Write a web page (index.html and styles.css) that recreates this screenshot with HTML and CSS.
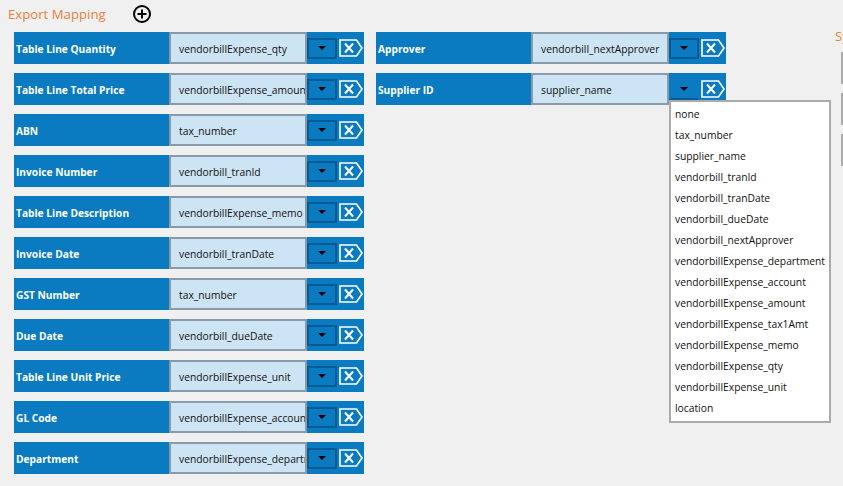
FILE: index.html
```html
<!DOCTYPE html>
<html lang="en">
<head>
	<meta charset="UTF-8">
	<title>Export Mapping</title>
	<link rel="stylesheet" href="styles.css">
</head>
<body>
	<div class="page">
		<div class="mapping">
			<div class="head">
				<span class="title">Export Mapping</span>
				<span class="add">
					<svg width="20" height="20" viewBox="0 0 20 20">
						<circle cx="10" cy="10" r="8" fill="none" stroke="#000" stroke-width="2"/>
						<path d="M10 5.5V14.5M5.5 10H14.5" stroke="#000" stroke-width="2"/>
					</svg>
				</span>
			</div>
			<div class="cols">
				<div class="col">
					<div class="row"><span class="label">Table Line Quantity</span><span class="field">vendorbillExpense_qty</span><span class="drop"><i></i></span><span class="del"></span></div>
					<div class="row"><span class="label">Table Line Total Price</span><span class="field">vendorbillExpense_amount</span><span class="drop"><i></i></span><span class="del"></span></div>
					<div class="row"><span class="label">ABN</span><span class="field">tax_number</span><span class="drop"><i></i></span><span class="del"></span></div>
					<div class="row"><span class="label">Invoice Number</span><span class="field">vendorbill_tranId</span><span class="drop"><i></i></span><span class="del"></span></div>
					<div class="row"><span class="label">Table Line Description</span><span class="field">vendorbillExpense_memo</span><span class="drop"><i></i></span><span class="del"></span></div>
					<div class="row"><span class="label">Invoice Date</span><span class="field">vendorbill_tranDate</span><span class="drop"><i></i></span><span class="del"></span></div>
					<div class="row"><span class="label">GST Number</span><span class="field">tax_number</span><span class="drop"><i></i></span><span class="del"></span></div>
					<div class="row"><span class="label">Due Date</span><span class="field">vendorbill_dueDate</span><span class="drop"><i></i></span><span class="del"></span></div>
					<div class="row"><span class="label">Table Line Unit Price</span><span class="field">vendorbillExpense_unit</span><span class="drop"><i></i></span><span class="del"></span></div>
					<div class="row"><span class="label">GL Code</span><span class="field">vendorbillExpense_account</span><span class="drop"><i></i></span><span class="del"></span></div>
					<div class="row"><span class="label">Department</span><span class="field">vendorbillExpense_department</span><span class="drop"><i></i></span><span class="del"></span></div>
				</div>
				<div class="col">
					<div class="row"><span class="label">Approver</span><span class="field">vendorbill_nextApprover</span><span class="drop"><i></i></span><span class="del"></span></div>
					<div class="row open"><span class="label">Supplier ID</span><span class="field">supplier_name</span><span class="drop"><i></i></span><span class="del"></span>
						<ul class="list">
							<li>none</li>
							<li>tax_number</li>
							<li>supplier_name</li>
							<li>vendorbill_tranId</li>
							<li>vendorbill_tranDate</li>
							<li>vendorbill_dueDate</li>
							<li>vendorbill_nextApprover</li>
							<li>vendorbillExpense_department</li>
							<li>vendorbillExpense_account</li>
							<li>vendorbillExpense_amount</li>
							<li>vendorbillExpense_tax1Amt</li>
							<li>vendorbillExpense_memo</li>
							<li>vendorbillExpense_qty</li>
							<li>vendorbillExpense_unit</li>
							<li>location</li>
						</ul>
					</div>
				</div>
			</div>
		</div>
		<div class="side">
			<div class="side-title">Sync</div>
			<div class="side-btn"></div>
			<div class="side-btn"></div>
			<div class="side-btn"></div>
		</div>
	</div>
	<svg width="0" height="0" class="defs">
		<symbol id="del" viewBox="0 0 24 18">
			<path d="M1 1H17.5L23 9L17.5 17H1Z" fill="none" stroke="#fff" stroke-width="1.6"/>
			<path d="M6 4.5L14 13.5M14 4.5L6 13.5" stroke="#fff" stroke-width="2"/>
		</symbol>
	</svg>
	<script>
		// icon in every remove button
		var dels=document.getElementsByClassName('del');
		for(var i=0;i<dels.length;i++){
			dels[i].innerHTML='<svg width="24" height="18"><use href="#del"/></svg>';
		}
	</script>
</body>
</html>
```

FILE: styles.css
```css
html,body{
	margin: 0;
	padding: 0;
	background: #f0f0f0;
	overflow: hidden;
}
ul{
	list-style: none;
	margin: 0;
	padding: 0;
}
.page{
	display: flex;
	width: 843px;
	height: 486px;
	font-family: "Open Sans", "Noto Sans", sans-serif;
}
.mapping{
	padding-left: 8px;
}
.head{
	display: flex;
	align-items: center;
	height: 28px;
	margin-bottom: 4px;
}
.title{
	color: #e9823f;
	font-size: 13.2px;
	width: 124px;
}
.add svg{
	display: block;
}
.cols{
	display: flex;
	gap: 12px;
	padding-left: 6px;
}
.col{
	display: flex;
	flex-direction: column;
	gap: 9px;
}
.row{
	position: relative;
	display: flex;
	align-items: center;
	width: 350px;
	height: 32px;
	background: #0a7bc1;
}
.label{
	width: 153px;
	padding: 2px 0 0 2px;
	color: #fff;
	font-weight: bold;
	font-size: 10.2px;
	white-space: nowrap;
}
.field{
	box-sizing: border-box;
	width: 138px;
	height: 32px;
	line-height: 29px;
	padding: 1px 0 0 8px;
	border: 2px solid #8b9aa7;
	background: #cde4f4;
	color: #111;
	font-size: 10.3px;
	white-space: nowrap;
	overflow: hidden;
}
.drop{
	box-sizing: border-box;
	display: flex;
	align-items: center;
	justify-content: center;
	width: 30px;
	height: 21px;
	border: 2px solid #075b94;
}
.drop i{
	width: 0;
	height: 0;
	border-left: 4px solid transparent;
	border-right: 4px solid transparent;
	border-top: 4px solid #000;
}
.open .drop{
	border-color: #0a7bc1;
	border-bottom-color: #075b94;
}
.del{
	margin-left: 2px;
	height: 18px;
}
.del svg{
	display: block;
}
.list{
	position: absolute;
	top: 27px;
	left: 293px;
	width: 158px;
	padding: 2px 0;
	background: #fff;
	border: 2px solid #ababab;
	font-size: 10.3px;
	color: #111;
	z-index: 2;
}
.list li{
	height: 21px;
	line-height: 21px;
	padding-left: 4px;
	white-space: nowrap;
}
.side{
	margin-left: 109px;
	padding-top: 26px;
}
.side-title{
	color: #e9823f;
	font-size: 13.2px;
	line-height: 20px;
	margin-bottom: 6px;
}
.side-btn{
	width: 40px;
	height: 32px;
	margin: 0 0 9px 6px;
	background: #ababab;
}
.defs{
	position: absolute;
}
```
